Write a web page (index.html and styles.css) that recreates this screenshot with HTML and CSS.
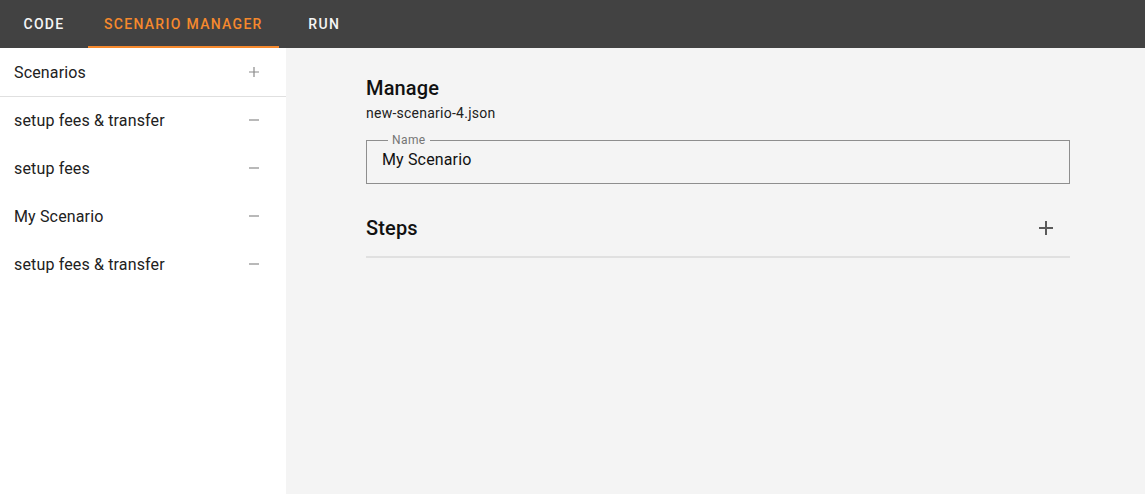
FILE: index.html
```html
<!DOCTYPE html>
<html>
<head>
<meta charset="utf-8">
<link rel="stylesheet" href="styles.css">
</head>
<body>
<header class="topbar">
  <nav class="tabs">
    <div class="tab">CODE</div>
    <div class="tab active">SCENARIO MANAGER</div>
    <div class="tab">RUN</div>
  </nav>
</header>
<div class="layout">
  <aside class="sidebar">
    <div class="side-head">
      <span>Scenarios</span>
      <svg class="icon-sm" viewBox="0 0 12 12" width="12" height="12"><path d="M6 1v10M1 6h10" stroke="#8a8a8a" stroke-width="1.2" fill="none"/></svg>
    </div>
    <div class="side-item"><span>setup fees &amp; transfer</span><svg class="icon-sm" viewBox="0 0 12 12" width="12" height="12"><path d="M1 6h10" stroke="#8a8a8a" stroke-width="1.2" fill="none"/></svg></div>
    <div class="side-item"><span>setup fees</span><svg class="icon-sm" viewBox="0 0 12 12" width="12" height="12"><path d="M1 6h10" stroke="#8a8a8a" stroke-width="1.2" fill="none"/></svg></div>
    <div class="side-item"><span>My Scenario</span><svg class="icon-sm" viewBox="0 0 12 12" width="12" height="12"><path d="M1 6h10" stroke="#8a8a8a" stroke-width="1.2" fill="none"/></svg></div>
    <div class="side-item"><span>setup fees &amp; transfer</span><svg class="icon-sm" viewBox="0 0 12 12" width="12" height="12"><path d="M1 6h10" stroke="#8a8a8a" stroke-width="1.2" fill="none"/></svg></div>
  </aside>
  <main class="main">
    <div class="content">
      <h2 class="title">Manage</h2>
      <div class="filename">new-scenario-4.json</div>
      <fieldset class="field">
        <legend>Name</legend>
        <div class="field-value">My Scenario</div>
      </fieldset>
      <div class="steps">
        <h2 class="title">Steps</h2>
        <svg class="icon-lg" viewBox="0 0 16 16" width="16" height="16"><path d="M8 1v14M1 8h14" stroke="#5a5a5a" stroke-width="2" fill="none"/></svg>
      </div>
    </div>
  </main>
</div>
</body>
</html>
```
FILE: styles.css
```css
html, body {
  margin: 0;
  padding: 0;
  height: 100%;
}
body {
  font-family: Roboto, "Liberation Sans", sans-serif;
  color: #212121;
  background: #f4f4f4;
  display: flex;
  flex-direction: column;
}
.topbar {
  height: 48px;
  background: #424242;
  flex: none;
}
.tabs {
  display: flex;
  height: 100%;
}
.tab {
  min-width: 88px;
  box-sizing: border-box;
  padding: 2px 16px 0;
  display: flex;
  align-items: center;
  justify-content: center;
  font-size: 14px;
  font-weight: 500;
  letter-spacing: 1.3px;
  color: #f5f5f5;
  border-bottom: 2px solid transparent;
}
.tab:last-child {
  min-width: 91px;
}
.tab.active {
  color: #f6892d;
  border-bottom-color: #f6892d;
}
.layout {
  flex: 1;
  display: flex;
}
.sidebar {
  width: 286px;
  background: #fff;
  flex: none;
}
.side-head, .side-item {
  height: 48px;
  box-sizing: border-box;
  display: flex;
  align-items: center;
  justify-content: space-between;
  padding: 0 26px 0 14px;
  font-size: 16px;
  letter-spacing: 0.15px;
  color: #212121;
}
.side-item {
  padding-bottom: 2px;
}
.side-head {
  height: 49px;
  border-bottom: 1px solid #e0e0e0;
}
.icon-sm {
  display: block;
}
.main {
  flex: 1;
}
.content {
  width: 704px;
  margin-left: 80px;
  padding-top: 28px;
}
.title {
  margin: 0;
  font-size: 20px;
  font-weight: 500;
  line-height: 24px;
  letter-spacing: 0.15px;
  color: #111;
}
.filename {
  font-size: 14px;
  margin-top: 4px;
  line-height: 18px;
  letter-spacing: 0.25px;
}
.field {
  margin: 12px 0 0;
  border: 1px solid #8e8e8e;
  padding: 0 15px 13px;
}
.field legend {
  font-size: 12px;
  color: #757575;
  padding: 0 4px;
  margin-left: 6px;
  line-height: 12px;
  letter-spacing: 0.4px;
}
.field-value {
  font-size: 16px;
  line-height: 20px;
  margin-top: 4px;
  letter-spacing: 0.15px;
  color: #111;
}
.steps {
  display: flex;
  align-items: center;
  justify-content: space-between;
  margin-top: 32px;
  padding: 0 16px 16px 0;
  border-bottom: 2px solid #e0e0e0;
}
.icon-lg {
  display: block;
}
```
